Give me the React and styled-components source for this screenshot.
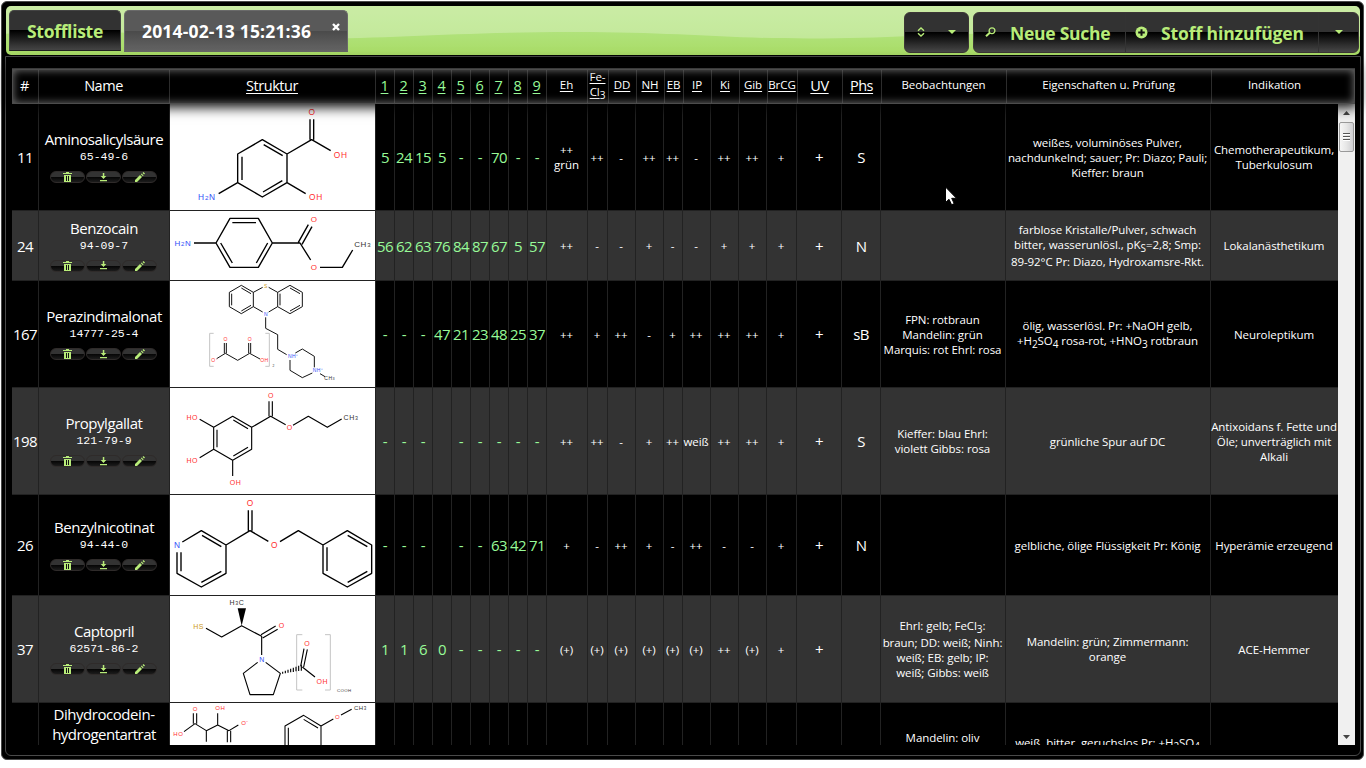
import React from "react";
import styled, { createGlobalStyle, css } from "styled-components";

const GREEN = "#b8ec79";
const RATE = "#98fb98";
const LINE = "#222";

const Global = createGlobalStyle`
  * { box-sizing: border-box; }
  body {
    margin: 0;
    background: #fff;
    color: #fff;
    overflow: hidden;
    font-family: "Open Sans", "Noto Sans", sans-serif;
  }
`;

const Frame = styled.div`
  margin: 1px 0 0 1px;
  width: 1363px;
  height: 759px;
  padding: 4px 2px 0 3px;
  background: #000;
  border: 1px solid #4a4a4a;
  border-radius: 6px;
`;

const Toolbar = styled.header`
  position: relative;
  display: flex;
  justify-content: space-between;
  align-items: flex-start;
  width: 1354px;
  height: 49px;
  margin: 0 1px 1px;
  padding: 4px 1px 0 3px;
  border-radius: 5px;
  overflow: hidden;
  background: linear-gradient(#b8e686, #b0e27a 55%, #a9dc66);
`;

const Gloss = styled.svg`
  position: absolute;
  inset: 0;
  width: 1354px;
  height: 49px;
`;

const Tabs = styled.nav`
  position: relative;
  display: flex;
  gap: 3px;
`;

const Tab = styled.div`
  display: flex;
  height: ${(p) => (p.$active ? 42 : 41)}px;
  width: ${(p) => p.$w}px;
  padding-left: 17px;
  border: 1px solid ${(p) => (p.$active ? "#6a6a6a" : "#444")};
  border-bottom-color: ${(p) => (p.$active ? "#666" : "#222")};
  border-radius: 5px 5px 0 0;
  color: ${(p) => (p.$active ? "#fff" : GREEN)};
  background: ${(p) =>
    p.$active
      ? "linear-gradient(#595959 0 50%, #4a4a4a 50%, #646464)"
      : "linear-gradient(#323232 0 48%, #000 50%, #464646)"};
  font-weight: 700;
  font-size: 17.5px;
  line-height: 40px;
  letter-spacing: ${(p) => p.$ls}px;
  white-space: nowrap;
`;

const CloseIcon = styled.svg`
  margin: 12px 0 0 21px;
  width: 8px;
  height: 8px;
`;

const Buttons = styled.div`
  position: relative;
  display: flex;
  gap: 4px;
  padding-top: 2px;
`;

const ButtonSet = styled.div`
  display: flex;
  width: ${(p) => p.$w}px;
  height: 41px;
  border: 1px solid #3c3636;
  border-radius: 6px;
  overflow: hidden;
  background: linear-gradient(#323232 0 49%, #000 50%, #484848);
`;

const Button = styled.div`
  display: flex;
  align-items: center;
  width: ${(p) => p.$w}px;
  padding-left: ${(p) => p.$pl}px;
  gap: ${(p) => p.$gap || 0}px;
  color: ${GREEN};
  font-weight: 700;
  font-size: 17.5px;
  letter-spacing: ${(p) => p.$ls || 0}px;
  white-space: nowrap;
  & + & { border-left: 1px solid #333; }
  svg { flex: none; margin-bottom: 1px; }
  span { padding-top: 1px; }
`;

const Panel = styled.main`
  width: 1356px;
  height: 700px;
  padding: 11px 0 0 6px;
  border: 1px solid #4a4a4a;
  border-radius: 0 0 6px 6px;
`;

const HeadRow = styled.div`
  position: relative;
  z-index: 1;
  display: grid;
  grid-template-columns: 27px 131px 206px repeat(9, 19px) 41px 21px repeat(2, 28px) 19px repeat(3, 28px) 30px 45px 39px 125px 205px 1fr;
  width: 1343px;
  height: 36px;
  border-top: 1px solid #3a3a3a;
  background: #000;
  box-shadow: 0 0 12px 3px #000;
  &::after {
    content: "";
    position: absolute;
    inset: 0;
    border: 1px solid #4c4c4c;
    box-shadow: inset 0 0 8px 0 #777;
    pointer-events: none;
  }
`;

const HeadCell = styled.div`
  display: flex;
  align-items: center;
  justify-content: center;
  border-right: 1px solid #2c2c2c;
  text-align: center;
  white-space: nowrap;
  color: ${(p) => (p.$rate ? RATE : "#fff")};
  font-size: ${(p) => (p.$small ? 11.5 : 14.5)}px;
  letter-spacing: ${(p) => (p.$small ? -0.05 : -0.45)}px;
  line-height: 15px;
  padding: 0 1px ${(p) => (p.$small ? 4 : 2)}px 0;
  &:last-child { border-right: 0; padding-right: 18px; }
  span {
    text-decoration: ${(p) => (p.$link ? "underline" : "none")};
    text-underline-offset: 2px;
  }
  sub { font-size: 10px; line-height: 1; }
`;

const Viewport = styled.div`
  display: flex;
  width: 1343px;
  height: 641px;
  overflow: hidden;
`;

const Body = styled.div`
  width: 1326px;
`;

const Row = styled.div`
  display: grid;
  grid-template-columns: 27px 131px 206px repeat(9, 19px) 41px 20px repeat(2, 28px) 19px repeat(3, 28px) 30px 45px 39px 125px 205px 127px;
  height: ${(p) => p.$h}px;
  background: ${(p) => (p.$odd ? "#333" : "#000")};
  overflow: hidden;
`;

const Cell = styled.div`
  display: flex;
  flex-direction: column;
  align-items: center;
  justify-content: ${(p) => (p.$top ? "flex-start" : "center")};
  padding-top: ${(p) => p.$top || 0}px;
  border-right: 1px solid ${LINE};
  border-bottom: 1px solid ${LINE};
  min-width: 0;
  font-size: 15px;
  letter-spacing: -0.55px;
  line-height: 20px;
  white-space: nowrap;
  &:last-child { border-right: 0; padding-right: 1px; }
  ${(p) =>
    p.$rate &&
    css`
      color: ${RATE};
    `}
  ${(p) =>
    p.$small &&
    css`
      font-size: 11.5px;
      letter-spacing: -0.06px;
      line-height: 15px;
      padding-right: 1px;
    `}
  sub { font-size: 10px; line-height: 11px; }
`;

const Name = styled.div`
  margin-top: -2px;
  letter-spacing: -0.45px;
`;

const Cas = styled.div`
  font-family: "Liberation Mono", monospace;
  font-size: 11.5px;
  letter-spacing: 0;
  line-height: 15px;
`;

const Actions = styled.div`
  display: flex;
  gap: 1px;
  margin: 7px 0 0 -1px;
`;

const MiniButton = styled.div`
  display: flex;
  justify-content: center;
  align-items: center;
  width: 35px;
  height: 12px;
  border: 1px solid #2f2b2a;
  border-radius: 6px;
  background: linear-gradient(#333 0 45%, #050505 50%, #1c1c1c);
  svg { flex: none; }
`;

const Structure = styled.svg`
  display: block;
  width: 205px;
  height: ${(p) => p.$h}px;
  background: #fff;
  font-family: "Liberation Sans", sans-serif;
`;

const StructureCell = styled.div`
  border-right: 1px solid ${LINE};
  border-bottom: 1px solid ${LINE};
`;

const Scrollbar = styled.div`
  display: flex;
  flex-direction: column;
  align-items: center;
  justify-content: space-between;
  width: 17px;
  background: #f0f0f0;
`;

const ScrollTop = styled.div`
  display: flex;
  flex-direction: column;
  align-items: center;
  padding-top: 7px;
`;

const Thumb = styled.div`
  display: flex;
  flex-direction: column;
  align-items: center;
  justify-content: center;
  gap: 1px;
  margin-top: 7px;
  width: 15px;
  height: 30px;
  border: 1px solid #999;
  border-radius: 2px;
  background: linear-gradient(90deg, #f6f6f6, #e6e6e6 50%, #cfcfd2);
  i { width: 7px; height: 2px; background: linear-gradient(#555 50%, #fff 50%); }
`;

const Cursor = styled.svg`
  position: absolute;
  left: 944px;
  top: 186px;
  z-index: 5;
`;

const INK = { r: "#ff3030", b: "#3050f8", k: "#333", y: "#cc9a22" };

const MOLECULES = {
  11: {
    box: [12, 318],
    size: 25,
    d: "M787 119L861 162V248L787 291L713 248V162ZM791 134L848 167M847 242L789 276M726 170V240M861 162L935 119L992 152M930 119V58M941 119V58M861 248L917 281M713 248L656 281",
    labels: [[935, 36, "O", "r"], [1021, 164, "OH", "r"], [947, 292, "OH", "r"], [620, 292, "H_2N", "b"]],
  },
  24: {
    box: [333, 207],
    size: 24,
    d: "M690 355H775L817 429L775 502H690L648 429ZM697 368H768M803 429L769 489M662 429L697 489M582 429H648M817 429H900L932 480M895 427L925 374M906 433L936 380M960 502H1027L1058 450",
    labels: [[548, 430, "H_2N", "b"], [942, 357, "O", "r"], [942, 502, "O", "r"], [1087, 431, "CH_3", "k"]],
  },
  167: {
    box: [3, 318],
    size: 15,
    sw: 2.8,
    d: "M724 16L760 37V80L724 101L688 80V37ZM870 16L907 37V80L870 101L833 80V37ZM724 24L753 41M695 41V76M753 76L724 93M870 24L900 41M840 41V76M900 76L870 93M760 37L788 22M806 22L833 37M760 80L788 96M806 96L833 80M797 112V145L833 164V208L860 224M886 219L907 207L943 229V262M870 240V271L907 293L937 279M960 281L975 290M650 236L676 220L713 241L749 220L780 237M673 220V189M679 220V189M746 220V189M752 220V189",
    gray: "M641 160H629V259H641M796 160H808V259H796",
    labels: [[797, 18, "S", "y"], [797, 102, "N", "b"], [879, 230, "NH⁺", "b"], [953, 272, "NH⁺", "b"], [988, 294, "CH_3", "k"], [676, 179, "O", "r"], [749, 179, "O", "r"], [643, 242, "O⁻", "r"], [792, 242, "OH", "r"], [820, 257, "2", "k", 10]],
  },
  198: {
    box: [324, 318],
    size: 21,
    sw: 3.4,
    d: "M698 409L755 442V508L698 541L641 508V442ZM700 420L744 446M651 449V502M744 502L700 528M599 418L641 442M599 533L641 508M698 541V588M755 442L812 409L857 434M807 409V364M817 409V364M879 436L925 409L982 442L1025 417",
    labels: [[576, 411, "HO", "r"], [576, 542, "HO", "r"], [706, 608, "OH", "r"], [812, 346, "O", "r"], [868, 443, "O", "r"], [1052, 411, "CH_3", "k"]],
  },
  26: {
    box: [0, 300],
    size: 25,
    d: "M547 141L604 107L678 150V235L604 276L531 235V172M543 229V172M606 121L664 155M664 229L604 262M678 150L750 107L805 139M745 107V46M756 107V46M840 140L895 107L969 150V235L1042 276L1115 235V150L1042 107L969 150M981 157V228M1043 121L1102 155M1102 229L1043 262",
    labels: [[531, 150, "N", "b"], [750, 24, "O", "r"], [823, 150, "O", "r"]],
  },
  37: {
    box: [303, 318],
    size: 21,
    sw: 3.4,
    d: "M618 400L665 426L725 392L785 424V480M783 419L827 393M788 429L833 403M773 502L730 535L750 599H820L841 535L797 502M848 530V536M856 527V535M864 524V533M872 521V532M880 518V531M888 515V529M896 512V528M904 509V527M902 514L912 461M911 516L922 463M907 516L945 546",
    wedge: "725,392 713,340 738,340",
    gray: "M907 419H890V585H907M975 419H991V585H975",
    labels: [[710, 322, "H_3C", "k"], [595, 394, "HS", "y"], [844, 391, "O", "r"], [785, 493, "N", "b"], [921, 446, "O", "r"], [966, 559, "OH", "r"], [1032, 585, "COOH", "k", 13]],
  },
  dhc: {
    box: [624, 126],
    size: 18,
    sw: 3.2,
    d: "M552 710L585 686L619 707V740M580 686V655M590 686V655M619 707L653 690V655M653 690L687 707L715 690M682 707V742M692 707V742M855 750V693L911 661L963 693V750M865 750V698M911 673L954 699M963 693L1000 672M1023 660L1055 643",
    labels: [[585, 641, "O", "r"], [660, 640, "OH", "r"], [534, 716, "HO", "r"], [734, 684, "O⁻", "r"], [630, 755, "OH", "r"], [1012, 667, "O", "r"], [1080, 640, "CH_3", "k"]],
  },
};

function Molecule({ id }) {
  const m = MOLECULES[id];
  return (
    <Structure $h={m.box[1] / 3} viewBox={`510 ${m.box[0]} 615 ${m.box[1]}`}>
      {m.gray && <path d={m.gray} fill="none" stroke="#c4c4c4" strokeWidth="3" />}
      <path d={m.d} fill="none" stroke="#000" strokeWidth={m.sw || 4.1} strokeLinejoin="round" />
      {m.wedge && <polygon points={m.wedge} fill="#000" />}
      {m.labels.map(([x, y, t, c, s], i) => {
        const size = s || m.size;
        const parts = t.split("_");
        return (
          <text key={i} x={x + 1} y={y + size * 0.36} fontSize={size} fill={INK[c]} textAnchor="middle" letterSpacing={size * 0.09}>
            {parts[0]}
            {parts[1] && <tspan fontSize={size * 0.75}>{parts[1][0]}</tspan>}
            {parts[1] && parts[1].slice(1)}
          </text>
        );
      })}
    </Structure>
  );
}

const TrashIcon = () => (
  <svg width="9" height="10" viewBox="0 0 9 10" fill={GREEN} shapeRendering="crispEdges">
    <path d="M3 0h3v1h3v1H0V1h3zM1 3h7v7H1z" />
    <path d="M3 4h1v5H3zM5 4h1v5H5z" fill="#111" />
  </svg>
);
const DownloadIcon = () => (
  <svg width="7" height="9" viewBox="0 0 7 9" fill={GREEN}>
    <path d="M2.800 0h1.500v3H6.300L3.500 6 .7 3h2.100zM0 7h7v1.300H0z" />
  </svg>
);
const PencilIcon = () => (
  <svg width="10" height="10" viewBox="0 0 10 10" fill={GREEN}>
    <path d="M0 10V8l5-5 2 2-5 5zM5.800 2.300L6.600 1.500l2 2-.8.8zM7.500.9L8.500 0 10 1.500l-1 1z" />
  </svg>
);
const Caret = () => (
  <svg width="8" height="4" viewBox="0 0 8 4">
    <path d="M0 0h8L4 4z" fill={GREEN} />
  </svg>
);

const lines = (value) =>
  value.split("\n").map((line, i) => (
    <div key={i}>
      {line.split(/_(.)/).map((part, j) => (j % 2 ? <sub key={j}>{part}</sub> : part))}
    </div>
  ));

const HEADS = [
  ["#"], ["Name"], ["Struktur", "l"],
  ..."123456789".split("").map((n) => [n, "lr"]),
  ["Eh", "ls"], ["Fe-\nCl_3", "ls"], ["DD", "ls"], ["NH", "ls"], ["EB", "ls"], ["IP", "ls"],
  ["Ki", "ls"], ["Gib", "ls"], ["BrCG", "ls"], ["UV", "l"], ["Phs", "l"],
  ["Beobachtungen", "s"], ["Eigenschaften u. Prüfung", "s"], ["Indikation", "s"],
];

const ROWS = [
  { id: 11, h: 107, name: "Aminosalicylsäure", cas: "65-49-6", rates: "5,24,15,5,-,-,70,-,-", tests: "++\ngrün,++,-,++,++,-,++,++,+", uv: "+", phs: "S", obs: "", props: "weißes, voluminöses Pulver,\nnachdunkelnd; sauer; Pr: Diazo; Pauli;\nKieffer: braun", ind: "Chemotherapeutikum,\nTuberkulosum" },
  { id: 24, h: 70, name: "Benzocain", cas: "94-09-7", rates: "56,62,63,76,84,87,67,5,57", tests: "++,-,-,+,-,-,+,+,+", uv: "+", phs: "N", obs: "", props: "farblose Kristalle/Pulver, schwach\nbitter, wasserunlösl., pK_S=2,8; Smp:\n89-92°C Pr: Diazo, Hydroxamsre-Rkt.", ind: "Lokalanästhetikum" },
  { id: 167, h: 107, name: "Perazindimalonat", cas: "14777-25-4", rates: "-,-,-,47,21,23,48,25,37", tests: "++,+,++,-,+,++,++,++,+", uv: "+", phs: "sB", obs: "FPN: rotbraun\nMandelin: grün\nMarquis: rot Ehrl: rosa", props: "ölig, wasserlösl. Pr: +NaOH gelb,\n+H_2SO_4 rosa-rot, +HNO_3 rotbraun", ind: "Neuroleptikum" },
  { id: 198, h: 107, name: "Propylgallat", cas: "121-79-9", rates: "-,-,-,,-,-,-,-,-", tests: "++,++,-,+,++,weiß,++,++,+", uv: "+", phs: "S", obs: "Kieffer: blau Ehrl:\nviolett Gibbs: rosa", props: "grünliche Spur auf DC", ind: "Antixoidans f. Fette und\nÖle; unverträglich mit\nAlkali" },
  { id: 26, h: 101, name: "Benzylnicotinat", cas: "94-44-0", rates: "-,-,-,,-,-,63,42,71", tests: "+,-,++,+,-,++,-,-,+", uv: "+", phs: "N", obs: "", props: "gelbliche, ölige Flüssigkeit Pr: König", ind: "Hyperämie erzeugend" },
  { id: 37, h: 107, name: "Captopril", cas: "62571-86-2", rates: "1,1,6,0,-,-,-,-,-", tests: "(+),(+),(+),(+),(+),(+),++,(+),+", uv: "+", phs: "", obs: "Ehrl: gelb; FeCl_3:\nbraun; DD: weiß; Ninh:\nweiß; EB: gelb; IP:\nweiß; Gibbs: weiß", props: "Mandelin: grün; Zimmermann:\norange", ind: "ACE-Hemmer" },
];

function SubstanceRow({ row, odd }) {
  return (
    <Row $h={row.h} $odd={odd}>
      <Cell>{row.id}</Cell>
      <Cell>
        <Name>{row.name}</Name>
        <Cas>{row.cas}</Cas>
        <Actions>
          <MiniButton><TrashIcon /></MiniButton>
          <MiniButton><DownloadIcon /></MiniButton>
          <MiniButton><PencilIcon /></MiniButton>
        </Actions>
      </Cell>
      <StructureCell><Molecule id={row.id} /></StructureCell>
      {row.rates.split(",").map((v, i) => <Cell key={i} $rate>{v}</Cell>)}
      {row.tests.split(",").map((v, i) => <Cell key={i} $small>{lines(v)}</Cell>)}
      <Cell>{row.uv}</Cell>
      <Cell>{row.phs}</Cell>
      <Cell $small>{lines(row.obs)}</Cell>
      <Cell $small>{lines(row.props)}</Cell>
      <Cell $small>{lines(row.ind)}</Cell>
    </Row>
  );
}

export default function App() {
  return (
    <>
      <Global />
      <Frame>
        <Toolbar>
          <Gloss viewBox="6 6 1354 49">
            <path
              d="M0 0H1366V36C1340 38 1330 38.500 1309 38.500C1220 38.500 1180 32 1073 32C960 32 900 38.500 809 38.500C720 38.500 680 32 573 32C460 32 400 38.500 309 38.500C220 38.500 180 32 73 32C40 32 20 33 0 34Z"
              fill="#fff"
              fillOpacity="0.26"
            />
          </Gloss>
          <Tabs>
            <Tab $w={112} $ls={-0.3}>Stoffliste</Tab>
            <Tab $w={224} $ls={0.17} $active>
              2014-02-13 15:21:36
              <CloseIcon viewBox="0 0 8 8">
                <path d="M1 1L7 7M7 1L1 7" stroke="#fff" strokeWidth="2.400" />
              </CloseIcon>
            </Tab>
          </Tabs>
          <Buttons>
            <ButtonSet $w={65}>
              <Button $pl={12} $gap={23}>
                <svg width="8" height="10" viewBox="0 0 8 10" fill="none" stroke={GREEN} strokeWidth="1.400">
                  <path d="M1 3.800L4 1L7 3.800M1 6.200L4 9L7 6.200" />
                </svg>
                <Caret />
              </Button>
            </ButtonSet>
            <ButtonSet $w={386}>
              <Button $w={151} $pl={11} $gap={14} $ls={-0.25}>
                <svg width="11" height="10" viewBox="0 0 11 10" fill="none" stroke={GREEN}>
                  <circle cx="7" cy="3.700" r="2.900" strokeWidth="1.300" />
                  <path d="M4.800 5.800L1 9.200" strokeWidth="2" />
                </svg>
                <span>Neue Suche</span>
              </Button>
              <Button $w={193} $pl={9} $gap={13} $ls={-0.1}>
                <svg width="13" height="13" viewBox="0 0 13 13">
                  <circle cx="6.500" cy="6.500" r="6" fill={GREEN} />
                  <path d="M6.500 3.200V9.800M3.200 6.500H9.800" stroke="#111" strokeWidth="2" />
                </svg>
                <span>Stoff hinzufügen</span>
              </Button>
              <Button $w={40} $pl={16}>
                <Caret />
              </Button>
            </ButtonSet>
          </Buttons>
        </Toolbar>
        <Panel>
          <HeadRow>
            {HEADS.map(([text, flags = ""], i) => (
              <HeadCell key={i} $link={flags.includes("l")} $rate={flags.includes("r")} $small={flags.includes("s")}>
                <span>{lines(text)}</span>
              </HeadCell>
            ))}
          </HeadRow>
          <Viewport>
            <Body>
              {ROWS.map((row, i) => <SubstanceRow key={row.id} row={row} odd={i % 2 === 1} />)}
              <Row $h={42}>
                <Cell />
                <Cell $top={3}>
                  <Name>Dihydrocodein-</Name>
                  <div>hydrogentartrat</div>
                </Cell>
                <StructureCell><Molecule id="dhc" /></StructureCell>
                {Array.from({ length: 20 }, (_, i) => <Cell key={i} />)}
                <Cell $small $top={27}>Mandelin: oliv</Cell>
                <Cell $small $top={32}>{lines("weiß, bitter, geruchslos Pr: +H_2SO_4")}</Cell>
                <Cell />
              </Row>
            </Body>
            <Scrollbar>
              <ScrollTop>
                <svg width="7" height="4" viewBox="0 0 7 4"><path d="M0 4h7L3.500 0z" fill="#444" /></svg>
                <Thumb><i /><i /><i /></Thumb>
              </ScrollTop>
              <svg width="7" height="13" viewBox="0 0 7 13"><path d="M0 3h7L3.500 7z" fill="#444" /></svg>
            </Scrollbar>
          </Viewport>
        </Panel>
      </Frame>
      <Cursor width="14" height="20" viewBox="0 0 14 20">
        <path d="M1.500 1V16.500L5 13.300L7.600 18.800L10.200 17.600L7.700 12.300H12.500Z" fill="#fff" stroke="#000" strokeWidth="1" />
      </Cursor>
    </>
  );
}
